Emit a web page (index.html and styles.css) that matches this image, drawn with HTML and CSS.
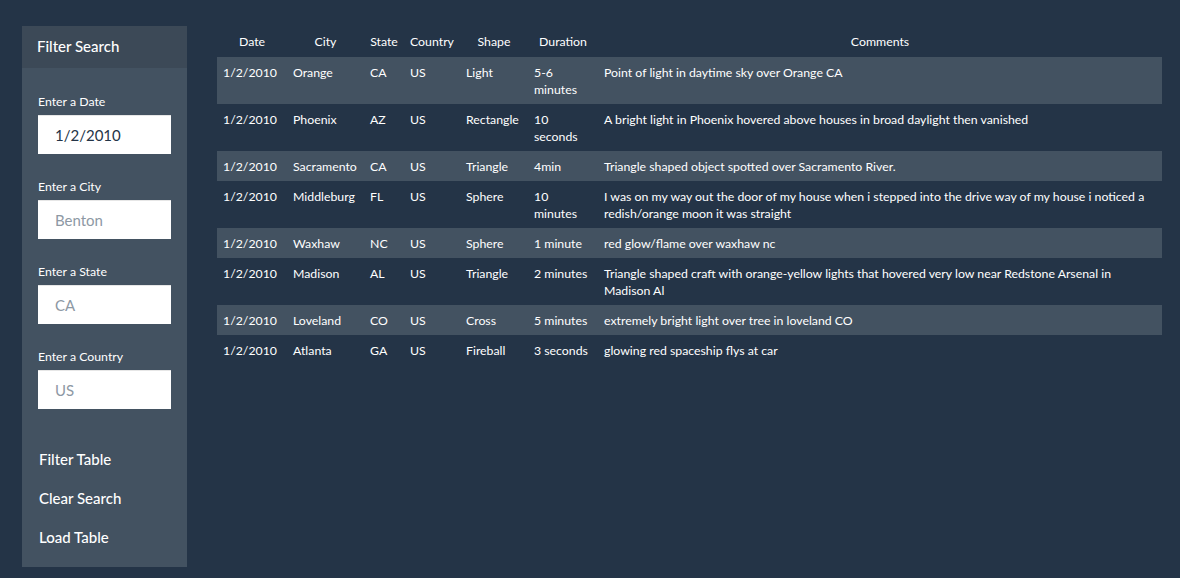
FILE: index.html
```html
<!DOCTYPE html>
<html>
<head>
<meta charset="utf-8">
<link rel="stylesheet" href="styles.css">
</head>
<body>
<div class="page">
  <aside class="sidebar">
    <div class="sidebar-head">Filter Search</div>
    <div class="sidebar-body">
      <div class="field">
        <label class="field-label">Enter a Date</label>
        <input class="field-input" type="text" value="1/2/2010">
      </div>
      <div class="field">
        <label class="field-label">Enter a City</label>
        <input class="field-input" type="text" placeholder="Benton">
      </div>
      <div class="field">
        <label class="field-label">Enter a State</label>
        <input class="field-input" type="text" placeholder="CA">
      </div>
      <div class="field">
        <label class="field-label">Enter a Country</label>
        <input class="field-input" type="text" placeholder="US">
      </div>
      <div class="actions">
        <button class="action">Filter Table</button>
        <button class="action">Clear Search</button>
        <button class="action">Load Table</button>
      </div>
    </div>
  </aside>
  <main class="results">
    <table class="ufo-table">
      <colgroup>
        <col class="c-date"><col class="c-city"><col class="c-state"><col class="c-country"><col class="c-shape"><col class="c-duration"><col class="c-comments">
      </colgroup>
      <thead>
        <tr><th>Date</th><th>City</th><th>State</th><th>Country</th><th>Shape</th><th>Duration</th><th>Comments</th></tr>
      </thead>
      <tbody>
        <tr><td>1/2/2010</td><td>Orange</td><td>CA</td><td>US</td><td>Light</td><td>5-6 minutes</td><td>Point of light in daytime sky over Orange CA</td></tr>
        <tr><td>1/2/2010</td><td>Phoenix</td><td>AZ</td><td>US</td><td>Rectangle</td><td>10 seconds</td><td>A bright light in Phoenix hovered above houses in broad daylight then vanished</td></tr>
        <tr><td>1/2/2010</td><td>Sacramento</td><td>CA</td><td>US</td><td>Triangle</td><td>4min</td><td>Triangle shaped object spotted over Sacramento River.</td></tr>
        <tr><td>1/2/2010</td><td>Middleburg</td><td>FL</td><td>US</td><td>Sphere</td><td>10 minutes</td><td>I was on my way out the door of my house when i stepped into the drive way of my house i noticed a redish/orange moon it was straight</td></tr>
        <tr><td>1/2/2010</td><td>Waxhaw</td><td>NC</td><td>US</td><td>Sphere</td><td>1 minute</td><td>red glow/flame over waxhaw nc</td></tr>
        <tr><td>1/2/2010</td><td>Madison</td><td>AL</td><td>US</td><td>Triangle</td><td>2 minutes</td><td>Triangle shaped craft with orange-yellow lights that hovered very low near Redstone Arsenal in Madison Al</td></tr>
        <tr><td>1/2/2010</td><td>Loveland</td><td>CO</td><td>US</td><td>Cross</td><td>5 minutes</td><td>extremely bright light over tree in loveland CO</td></tr>
        <tr><td>1/2/2010</td><td>Atlanta</td><td>GA</td><td>US</td><td>Fireball</td><td>3 seconds</td><td>glowing red spaceship flys at car</td></tr>
      </tbody>
    </table>
  </main>
</div>
</body>
</html>
```

FILE: styles.css
```css
* { box-sizing: border-box; }

html, body {
  margin: 0;
  height: 100%;
}

body {
  background: #243447;
  color: #ffffff;
  font-family: "Lato", "Open Sans", sans-serif;
}

.page {
  display: flex;
  align-items: flex-start;
  gap: 30px;
  padding: 26px 18px 0 22px;
}

.sidebar {
  flex: 0 0 165px;
  width: 165px;
  height: 541px;
  background: #435261;
  display: flex;
  flex-direction: column;
}

.sidebar-head {
  height: 42px;
  line-height: 41px;
  padding-left: 15px;
  background: #3c4957;
  font-size: 15px;
  font-weight: 500;
}

.sidebar-body {
  padding: 26px 16px 0 16px;
}

.field {
  display: flex;
  flex-direction: column;
  margin-bottom: 25px;
}

.field-label {
  font-size: 12.3px;
  line-height: 16px;
  margin-bottom: 5px;
}

.field-input {
  width: 133px;
  height: 39px;
  border: none;
  border-top: 1px solid #e6e6e6;
  background: #ffffff;
  padding: 0 0 0 17px;
  font-family: inherit;
  font-size: 15px;
  color: #243447;
  outline: none;
}

.field-input::placeholder {
  color: #8d98a4;
}

.actions {
  display: flex;
  flex-direction: column;
  margin: 30px -16px 0 -16px;
}

.action {
  height: 39px;
  background: transparent;
  border: none;
  color: #ffffff;
  text-align: left;
  padding: 0 0 0 17px;
  font-family: inherit;
  font-size: 15px;
  font-weight: 500;
}

.results {
  flex: 0 0 945px;
}

.ufo-table {
  width: 945px;
  table-layout: fixed;
  border-collapse: collapse;
  font-size: 12.3px;
  line-height: 17px;
}

.c-date { width: 70px; }
.c-city { width: 77px; }
.c-state { width: 40px; }
.c-country { width: 56px; }
.c-shape { width: 68px; }
.c-duration { width: 70px; }

.ufo-table th {
  font-weight: 400;
  text-align: center;
  height: 31px;
  padding: 0 4px;
}

.ufo-table td {
  text-align: left;
  vertical-align: top;
  padding: 7px 6px 6px 6px;
}

.ufo-table tbody tr:nth-child(odd) {
  background: #435261;
}
```
